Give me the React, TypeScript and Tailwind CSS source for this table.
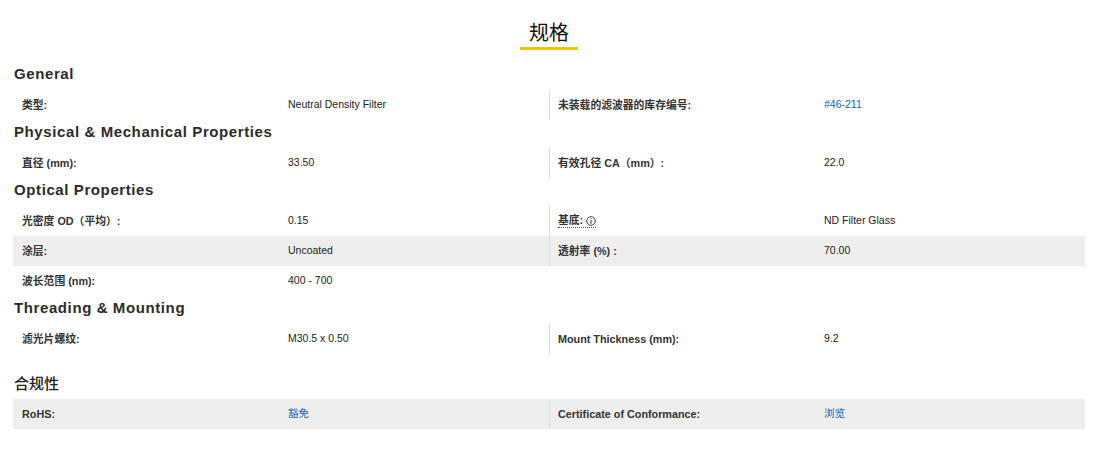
import React from "react";

type Cell = { label: React.ReactNode; value: React.ReactNode };
type Row = { left: Cell; right?: Cell; shaded?: boolean };
type Section = { title: string; rows: Row[] };

const link = "text-[#0a64c0]";

function InfoLabel() {
  return (
    <span className="inline-flex items-center gap-[3px] border-b border-dotted border-[#555] leading-[13px]">
      基底:
      <svg width="10" height="10" viewBox="0 0 10 10" className="text-[#333]">
        <circle cx="5" cy="5" r="4.3" fill="none" stroke="currentColor" strokeWidth="0.9" />
        <rect x="4.5" y="2.2" width="1" height="1" fill="currentColor" />
        <rect x="4.5" y="4" width="1" height="3.8" fill="currentColor" />
      </svg>
    </span>
  );
}

const sections: Section[] = [
  {
    title: "General",
    rows: [
      {
        left: { label: "类型:", value: "Neutral Density Filter" },
        right: { label: "未装载的滤波器的库存编号:", value: <span className={link}>#46-211</span> },
      },
    ],
  },
  {
    title: "Physical & Mechanical Properties",
    rows: [
      {
        left: { label: "直径 (mm):", value: "33.50" },
        right: { label: "有效孔径 CA（mm）:", value: "22.0" },
      },
    ],
  },
  {
    title: "Optical Properties",
    rows: [
      {
        left: { label: "光密度 OD（平均）:", value: "0.15" },
        right: { label: <InfoLabel />, value: "ND Filter Glass" },
      },
      {
        shaded: true,
        left: { label: "涂层:", value: "Uncoated" },
        right: { label: "透射率 (%) :", value: "70.00" },
      },
      { left: { label: "波长范围 (nm):", value: "400 - 700" } },
    ],
  },
  {
    title: "Threading & Mounting",
    rows: [
      {
        left: { label: "滤光片螺纹:", value: "M30.5 x 0.50" },
        right: { label: "Mount Thickness (mm):", value: "9.2" },
      },
    ],
  },
];

function SpecRow({ row }: { row: Row }) {
  return (
    <div className={`flex h-[30px] items-center ${row.shaded ? "bg-[#eeeeee]" : ""}`}>
      <div className="w-[275px] pl-[9px] text-[10.8px] font-bold text-[#333]">{row.left.label}</div>
      <div className="w-[261px] text-[10.5px] text-[#222]">{row.left.value}</div>
      {row.right && (
        <>
          <div className="flex h-full w-[275px] items-center border-l border-[#dcdcdc] pl-[8px] text-[10.8px] font-bold text-[#333]">
            {row.right.label}
          </div>
          <div className="w-[261px] text-[10.5px] text-[#222]">{row.right.value}</div>
        </>
      )}
    </div>
  );
}

export default function App() {
  return (
    <div
      className="min-h-[462px] bg-white"
      style={{ fontFamily: '"Liberation Sans", "Noto Sans CJK SC", sans-serif' }}
    >
      <div className="ml-[13px] w-[1072px]">
        <div className="flex justify-center pt-[21px] pb-[12px]">
          <h2 className="border-b-[3px] border-[#f5c400] px-[9px] pb-[1px] text-[20px] leading-[25px] text-[#111]">
            规格
          </h2>
        </div>

        {sections.map((s) => (
          <div key={s.title}>
            <h3 className="h-[28px] pl-[1px] text-[15px] leading-[24px] font-extrabold tracking-[0.6px] text-[#2b2b2b]">
              {s.title}
            </h3>
            {s.rows.map((r, i) => (
              <SpecRow key={i} row={r} />
            ))}
          </div>
        ))}

        <div className="mt-[16px]">
          <h3 className="h-[29px] pl-[1px] text-[15px] leading-[28px] font-medium text-[#222]">合规性</h3>
          <SpecRow
            row={{
              shaded: true,
              left: { label: "RoHS:", value: <span className={link}>豁免</span> },
              right: { label: "Certificate of Conformance:", value: <span className={link}>浏览</span> },
            }}
          />
        </div>
      </div>
    </div>
  );
}
